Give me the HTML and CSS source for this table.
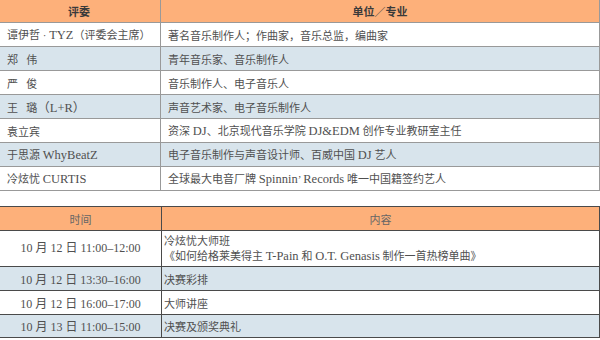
FILE: index.html
```html
<!DOCTYPE html>
<html lang="zh">
<head>
<meta charset="utf-8">
<link rel="stylesheet" href="styles.css">
</head>
<body>
<div class="page">
  <table class="grid judges">
    <colgroup><col class="c1"><col class="c2"></colgroup>
    <thead>
      <tr><th>评委</th><th>单位／专业</th></tr>
    </thead>
    <tbody>
      <tr><td>谭伊哲 · <span class="lat">TYZ</span>（评委会主席）</td><td>著名音乐制作人；作曲家，音乐总监，编曲家</td></tr>
      <tr class="alt"><td>郑&nbsp;&nbsp;&nbsp;伟</td><td>青年音乐家、音乐制作人</td></tr>
      <tr><td>严&nbsp;&nbsp;&nbsp;俊</td><td>音乐制作人、电子音乐人</td></tr>
      <tr class="alt"><td>王&nbsp;&nbsp;&nbsp;璐<span class="lat">（L+R）</span></td><td>声音艺术家、电子音乐制作人</td></tr>
      <tr><td>袁立宾</td><td>资深 <span class="lat">DJ</span>、北京现代音乐学院 <span class="lat">DJ&amp;EDM</span> 创作专业教研室主任</td></tr>
      <tr class="alt"><td>于思源 <span class="lat">WhyBeatZ</span></td><td>电子音乐制作与声音设计师、百威中国 <span class="lat">DJ</span> 艺人</td></tr>
      <tr><td>冷炫忧 <span class="lat">CURTIS</span></td><td>全球最大电音厂牌 <span class="lat">Spinnin</span>’ <span class="lat">Records</span> 唯一中国籍签约艺人</td></tr>
    </tbody>
  </table>

  <table class="grid schedule">
    <colgroup><col class="c1"><col class="c2"></colgroup>
    <thead>
      <tr><th>时间</th><th>内容</th></tr>
    </thead>
    <tbody>
      <tr class="tall"><td class="time">10 月 12 日 11:00–12:00</td><td>冷炫忧大师班<br>《如何给格莱美得主 <span class="lat">T-Pain</span> 和 <span class="lat">O.T. Genasis</span> 制作一首热榜单曲》</td></tr>
      <tr class="alt"><td class="time">10 月 12 日 13:30–16:00</td><td>决赛彩排</td></tr>
      <tr><td class="time">10 月 12 日 16:00–17:00</td><td>大师讲座</td></tr>
      <tr class="alt"><td class="time">10 月 13 日 11:00–15:00</td><td>决赛及颁奖典礼</td></tr>
    </tbody>
  </table>
</div>
</body>
</html>
```

FILE: styles.css
```css
html, body {
  margin: 0;
  padding: 0;
  background: #ffffff;
}

.page {
  width: 600px;
  height: 340px;
  overflow: hidden;
  font-family: "Liberation Serif", "Noto Sans CJK SC", serif;
  font-size: 11px;
  color: #505050;
}

.lat {
  font-size: 12.5px;
}

.grid {
  border-collapse: collapse;
  table-layout: fixed;
  width: 600px;
  margin-left: -1px;
}

.grid td,
.grid th {
  padding: 0 0 0 7px;
  text-align: left;
  vertical-align: middle;
  white-space: nowrap;
}

.grid th {
  background: #fdb07a;
  text-align: center;
  padding: 0;
}

.grid tr.alt td {
  background: #d8e4ec;
}

/* Judges table */
.judges {
  margin-top: -1px;
}

.judges .c1 { width: 161px; }
.judges .c2 { width: 439px; }

.judges td,
.judges th {
  border: 1px solid #999999;
  height: 23px;
}

.judges thead th {
  height: 22px;
  color: #3a3a3a;
  font-weight: bold;
  font-family: "Noto Sans CJK SC", sans-serif;
}

.judges thead th:first-child {
  padding-right: 2px;
}

/* Schedule table */
.schedule {
  margin-top: 15px;
}

.schedule .c1 { width: 162px; }
.schedule .c2 { width: 438px; }

.schedule td,
.schedule th {
  border: 1px solid #4a4a4a;
  height: 23px;
}

.schedule td {
  padding-left: 2px;
}

.schedule thead th {
  color: #666666;
  font-weight: normal;
  font-family: "Noto Sans CJK SC", sans-serif;
}

.schedule tr.tall td {
  height: 35px;
  line-height: 15px;
}

.schedule td.time {
  text-align: center;
  padding: 0;
  font-size: 12px;
}

.schedule tbody tr:last-child td {
  height: 22px;
}
```
